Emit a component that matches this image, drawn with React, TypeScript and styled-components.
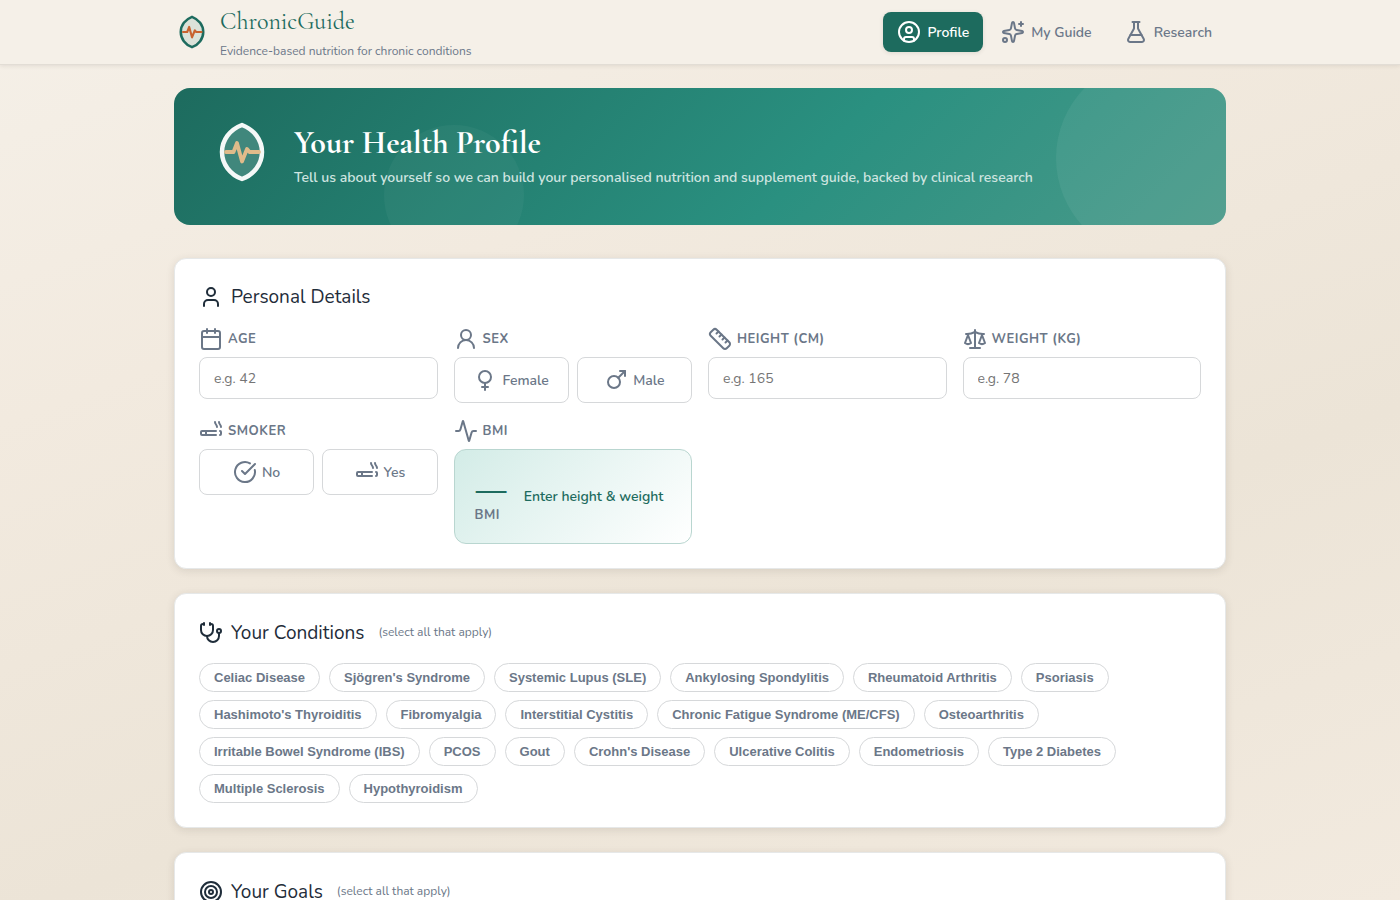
import React from "react";
import styled, { createGlobalStyle, css } from "styled-components";
import {
  Activity,
  Calendar,
  Cigarette,
  CircleCheckBig,
  CircleUser,
  FlaskConical,
  Mars,
  Ruler,
  Scale,
  Sparkles,
  Stethoscope,
  Target,
  User,
  UserRound,
  Venus,
} from "lucide-react";

const sans = `"Nunito", "Noto Sans", sans-serif`;
const serif = `"Cormorant Garamond", "Liberation Serif", serif`;

const color = {
  green: "#1d6b5e",
  ink: "#1f2d3a",
  muted: "#6b7788",
  line: "#d6d8da",
};

const GlobalStyle = createGlobalStyle`
  *, *::before, *::after { box-sizing: border-box; }
  body {
    margin: 0;
    min-height: 100vh;
    font-family: ${sans};
    color: ${color.ink};
    background: linear-gradient(160deg, #f5f0e8 0%, #f2eadf 30%, #ece4d7 65%, #f2eadf 100%) fixed;
  }
`;

const Header = styled.header`
  background: #f5f0e8;
  border-bottom: 1px solid #e2ddd5;
  box-shadow: 0 1px 4px rgba(60, 50, 40, 0.1);
`;

const HeaderInner = styled.div`
  max-width: 1100px;
  height: 64px;
  margin: 0 auto;
  padding: 0 24px;
  display: flex;
  align-items: center;
  justify-content: space-between;
`;

const Brand = styled.div`
  display: flex;
  align-items: center;
  gap: 10px;
`;

const BrandText = styled.div`
  padding-top: 2px;
`;

const BrandName = styled.div`
  font: 400 24px/36px ${serif};
  color: ${color.green};
`;

const Tagline = styled.div`
  font-size: 12px;
  line-height: 22px;
  color: ${color.muted};
`;

const Nav = styled.nav`
  display: flex;
  gap: 4px;
`;

const NavButton = styled.button<{ $active?: boolean }>`
  height: 40px;
  padding: 0 14px;
  display: flex;
  align-items: center;
  gap: 6px;
  border: 0;
  border-radius: 8px;
  background: transparent;
  color: ${color.muted};
  font: 600 14px/21px ${sans};
  ${(p) =>
    p.$active &&
    css`
      background: ${color.green};
      color: #fff;
      box-shadow: 0 1px 4px rgba(60, 50, 40, 0.12);
    `}
`;

const Main = styled.main`
  max-width: 1100px;
  margin: 0 auto;
  padding: 23px 24px 40px;
`;

const Hero = styled.section`
  position: relative;
  overflow: hidden;
  margin-bottom: 33px;
  padding: 32px 36px 36px;
  display: flex;
  align-items: flex-start;
  gap: 20px;
  border-radius: 16px;
  color: #fff;
  background: linear-gradient(135deg, #1d6b5e 0%, #2a9080 60%, #4a9a8a 100%);

  &::before,
  &::after {
    content: "";
    position: absolute;
    border-radius: 50%;
  }
  &::before {
    width: 200px;
    height: 200px;
    top: -30px;
    right: -30px;
    background: rgba(255, 255, 255, 0.06);
  }
  &::after {
    width: 140px;
    height: 140px;
    bottom: -40px;
    left: 20%;
    background: rgba(255, 255, 255, 0.04);
  }
`;

const HeroTitle = styled.h1`
  margin: 0;
  font: 700 32px/46px ${serif};
`;

const HeroText = styled.p`
  margin: 0;
  font-size: 14px;
  line-height: 23px;
  font-weight: 600;
  color: #cfe5e0;
`;

const Card = styled.section`
  margin-bottom: 24px;
  padding: 24px;
  background: #fff;
  border: 1px solid #e6e8e8;
  border-radius: 12px;
  box-shadow: 0 2px 8px rgba(60, 50, 40, 0.12);
`;

const CardTitle = styled.h2`
  margin: 0 0 16px;
  min-height: 28px;
  display: flex;
  align-items: center;
  gap: 8px;
  font-size: 19px;
  line-height: 28px;
  font-weight: 400;
`;

const Hint = styled.span`
  margin-left: 6px;
  font-size: 12px;
  line-height: 29px;
  font-weight: 400;
  color: ${color.muted};
`;

const FieldGrid = styled.div`
  display: grid;
  grid-template-columns: repeat(4, minmax(0, 1fr));
  gap: 16px;
`;

const Field = styled.div`
  min-width: 0;
`;

const fieldLabel = css`
  height: 24px;
  margin-bottom: 6px;
  display: flex;
  align-items: center;
  gap: 5px;
  font-size: 13px;
  font-weight: 700;
  letter-spacing: 0.04em;
  color: ${color.muted};
`;

const Label = styled.label`
  ${fieldLabel}
`;

const GroupLabel = styled.div`
  ${fieldLabel}
`;

const Input = styled.input`
  display: block;
  width: 100%;
  height: 42px;
  padding: 0 14px;
  border: 1px solid ${color.line};
  border-radius: 8px;
  background: #fff;
  color: ${color.ink};
  font: 400 14px/20px ${sans};
  &::placeholder {
    color: #757575;
  }
`;

const Options = styled.div`
  display: grid;
  grid-template-columns: 1fr 1fr;
  gap: 8px;
`;

const Option = styled.button`
  height: 46px;
  display: flex;
  align-items: center;
  justify-content: center;
  gap: 5px;
  border: 1px solid ${color.line};
  border-radius: 8px;
  background: #fff;
  color: ${color.muted};
  font: 600 14px/21px ${sans};
`;

const BmiBox = styled.div`
  height: 95px;
  padding: 0 20px;
  display: flex;
  align-items: center;
  gap: 16px;
  border: 1px solid #b9d6d0;
  border-radius: 12px;
  background: linear-gradient(135deg, #d3ece7 0%, #fff 100%);
`;

const BmiValue = styled.div`
  font: 700 40px/36px ${serif};
  color: ${color.green};
`;

const BmiUnit = styled.div`
  font-size: 13px;
  line-height: 20px;
  font-weight: 700;
  letter-spacing: 0.04em;
  color: ${color.muted};
`;

const BmiNote = styled.div`
  font-size: 14px;
  line-height: 21px;
  font-weight: 600;
  white-space: nowrap;
  color: ${color.green};
`;

const Chips = styled.div`
  display: flex;
  flex-wrap: wrap;
  gap: 8px 9px;
`;

const Chip = styled.button`
  height: 29px;
  padding: 0 14px;
  border: 1px solid ${color.line};
  border-radius: 15px;
  background: #fff;
  color: ${color.muted};
  font: 600 13px/15px "Liberation Sans", sans-serif;
`;

const conditions = [
  "Celiac Disease",
  "Sjögren's Syndrome",
  "Systemic Lupus (SLE)",
  "Ankylosing Spondylitis",
  "Rheumatoid Arthritis",
  "Psoriasis",
  "Hashimoto's Thyroiditis",
  "Fibromyalgia",
  "Interstitial Cystitis",
  "Chronic Fatigue Syndrome (ME/CFS)",
  "Osteoarthritis",
  "Irritable Bowel Syndrome (IBS)",
  "PCOS",
  "Gout",
  "Crohn's Disease",
  "Ulcerative Colitis",
  "Endometriosis",
  "Type 2 Diabetes",
  "Multiple Sclerosis",
  "Hypothyroidism",
];

function Logo({ size, outline, fill, pulse }: { size: number; outline: string; fill: string; pulse: string }) {
  return (
    <svg width={size} height={size} viewBox="0 0 64 64" fill="none" aria-hidden="true">
      <path
        d="M32 5C20 9.500 12 20 12 32s8 22.500 20 27c12-4.500 20-15 20-27S44 9.500 32 5Z"
        fill={fill}
        stroke={outline}
        strokeWidth="4.500"
        strokeLinejoin="round"
      />
      <path
        d="M16 32h7.500l3.500-9 5 18.500 5-12.500 2.500 3H49"
        stroke={pulse}
        strokeWidth="3.800"
        strokeLinecap="round"
        strokeLinejoin="round"
      />
    </svg>
  );
}

export default function App() {
  return (
    <>
      <GlobalStyle />
      <Header>
        <HeaderInner>
          <Brand>
            <Logo size={36} outline="#1d6b5e" fill="#dbe2d9" pulse="#c8622f" />
            <BrandText>
              <BrandName>ChronicGuide</BrandName>
              <Tagline>Evidence-based nutrition for chronic conditions</Tagline>
            </BrandText>
          </Brand>
          <Nav>
            <NavButton $active>
              <CircleUser size={24} />
              Profile
            </NavButton>
            <NavButton>
              <Sparkles size={24} />
              My Guide
            </NavButton>
            <NavButton>
              <FlaskConical size={24} />
              Research
            </NavButton>
          </Nav>
        </HeaderInner>
      </Header>
      <Main>
        <Hero>
          <Logo size={64} outline="#f4f8f7" fill="#40877c" pulse="#e0bb8a" />
          <div>
            <HeroTitle>Your Health Profile</HeroTitle>
            <HeroText>
              Tell us about yourself so we can build your personalised nutrition and supplement guide, backed by
              clinical research
            </HeroText>
          </div>
        </Hero>

        <Card>
          <CardTitle>
            <User size={24} />
            Personal Details
          </CardTitle>
          <FieldGrid>
            <Field>
              <Label htmlFor="age">
                <Calendar size={24} />
                AGE
              </Label>
              <Input id="age" placeholder="e.g. 42" />
            </Field>
            <Field>
              <GroupLabel id="sex">
                <UserRound size={24} />
                SEX
              </GroupLabel>
              <Options role="group" aria-labelledby="sex">
                <Option>
                  <Venus size={24} />
                  Female
                </Option>
                <Option>
                  <Mars size={24} />
                  Male
                </Option>
              </Options>
            </Field>
            <Field>
              <Label htmlFor="height">
                <Ruler size={24} />
                HEIGHT (CM)
              </Label>
              <Input id="height" placeholder="e.g. 165" />
            </Field>
            <Field>
              <Label htmlFor="weight">
                <Scale size={24} />
                WEIGHT (KG)
              </Label>
              <Input id="weight" placeholder="e.g. 78" />
            </Field>
            <Field>
              <GroupLabel id="smoker">
                <Cigarette size={24} />
                SMOKER
              </GroupLabel>
              <Options role="group" aria-labelledby="smoker">
                <Option>
                  <CircleCheckBig size={24} />
                  No
                </Option>
                <Option>
                  <Cigarette size={24} />
                  Yes
                </Option>
              </Options>
            </Field>
            <Field>
              <GroupLabel>
                <Activity size={24} />
                BMI
              </GroupLabel>
              <BmiBox>
                <div>
                  <BmiValue>—</BmiValue>
                  <BmiUnit>BMI</BmiUnit>
                </div>
                <BmiNote>Enter height &amp; weight</BmiNote>
              </BmiBox>
            </Field>
          </FieldGrid>
        </Card>

        <Card>
          <CardTitle>
            <Stethoscope size={24} />
            Your Conditions
            <Hint>(select all that apply)</Hint>
          </CardTitle>
          <Chips>
            {conditions.map((name) => (
              <Chip key={name}>{name}</Chip>
            ))}
          </Chips>
        </Card>

        <Card>
          <CardTitle>
            <Target size={24} />
            Your Goals
            <Hint>(select all that apply)</Hint>
          </CardTitle>
        </Card>
      </Main>
    </>
  );
}
